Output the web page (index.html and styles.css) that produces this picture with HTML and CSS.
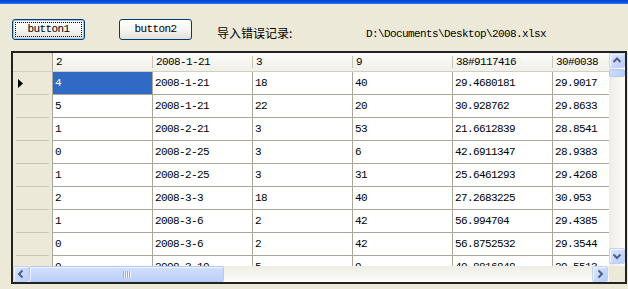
FILE: index.html
```html
<!DOCTYPE html>
<html>
<head>
<meta charset="utf-8">
<link rel="stylesheet" href="styles.css">
</head>
<body>
<div class="titlebar"></div>
<div class="toolbar">
  <button class="btn btn-default"><span class="focus">button1</span></button>
  <button class="btn btn2">button2</button>
  <span class="label">导入错误记录:</span>
  <span class="path">D:\Documents\Desktop\2008.xlsx</span>
</div>
<div class="dgv">
  <div class="cells">
    <div class="grid">
      <div class="corner"></div>
      <div class="ch">2</div><div class="ch">2008-1-21</div><div class="ch">3</div><div class="ch">9</div><div class="ch">38#9117416</div><div class="ch">30#0038</div>

      <div class="rh"><svg class="cur" width="5" height="9" viewBox="0 0 5 9"><polygon points="0,0 5,4.5 0,9" fill="#000"/></svg></div>
      <div class="c sel">4</div><div class="c">2008-1-21</div><div class="c">18</div><div class="c">40</div><div class="c">29.4680181</div><div class="c">29.9017</div>

      <div class="rh"></div>
      <div class="c">5</div><div class="c">2008-1-21</div><div class="c">22</div><div class="c">20</div><div class="c">30.928762</div><div class="c">29.8633</div>

      <div class="rh"></div>
      <div class="c">1</div><div class="c">2008-2-21</div><div class="c">3</div><div class="c">53</div><div class="c">21.6612839</div><div class="c">28.8541</div>

      <div class="rh"></div>
      <div class="c">0</div><div class="c">2008-2-25</div><div class="c">3</div><div class="c">6</div><div class="c">42.6911347</div><div class="c">28.9383</div>

      <div class="rh"></div>
      <div class="c">1</div><div class="c">2008-2-25</div><div class="c">3</div><div class="c">31</div><div class="c">25.6461293</div><div class="c">29.4268</div>

      <div class="rh"></div>
      <div class="c">2</div><div class="c">2008-3-3</div><div class="c">18</div><div class="c">40</div><div class="c">27.2683225</div><div class="c">30.953</div>

      <div class="rh"></div>
      <div class="c">1</div><div class="c">2008-3-6</div><div class="c">2</div><div class="c">42</div><div class="c">56.994704</div><div class="c">29.4385</div>

      <div class="rh"></div>
      <div class="c">0</div><div class="c">2008-3-6</div><div class="c">2</div><div class="c">42</div><div class="c">56.8752532</div><div class="c">29.3544</div>

      <div class="rh"></div>
      <div class="c">0</div><div class="c">2008-3-10</div><div class="c">5</div><div class="c">9</div><div class="c">40.8816848</div><div class="c">29.5513</div>
    </div>
  </div>
  <div class="vscroll">
    <div class="sbtn sbtn-up"><svg width="14" height="13" viewBox="0 0 14 13"><polyline points="3.5,8 7,4.5 10.5,8" fill="none" stroke="#4D6185" stroke-width="2"/></svg></div>
    <div class="vthumb"></div>
    <div class="vtrack"></div>
    <div class="sbtn sbtn-down"><svg width="14" height="14" viewBox="0 0 14 14"><polyline points="3.5,5.5 7,9 10.5,5.5" fill="none" stroke="#4D6185" stroke-width="2"/></svg></div>
  </div>
  <div class="hscroll">
    <div class="sbtn sbtn-left"><svg width="14" height="14" viewBox="0 0 14 14"><polyline points="8.5,3.5 5,7 8.5,10.5" fill="none" stroke="#4D6185" stroke-width="2"/></svg></div>
    <div class="hthumb"><span class="grip"></span></div>
    <div class="htrack"></div>
    <div class="sbtn sbtn-right"><svg width="14" height="14" viewBox="0 0 14 14"><polyline points="5.5,3.5 9,7 5.5,10.5" fill="none" stroke="#4D6185" stroke-width="2"/></svg></div>
  </div>
  <div class="sizebox"></div>
</div>
</body>
</html>
```
FILE: styles.css
```css
html, body {
  margin: 0;
  padding: 0;
}
body {
  background: #ECE9D8;
  width: 628px;
  height: 289px;
  overflow: hidden;
  font-family: "Liberation Mono", "DejaVu Sans Mono", monospace;
  font-size: 11px;
  letter-spacing: -0.6px;
  color: #000;
}

.titlebar {
  height: 4px;
  background: linear-gradient(#0840D2, #0A55E8 60%, #3E80F4);
}

.toolbar {
  display: flex;
  align-items: flex-start;
  padding: 15px 0 0 12px;
  height: 21px;
}

.btn {
  box-sizing: border-box;
  width: 73px;
  height: 21px;
  margin: 0;
  padding: 0;
  border: 1px solid #003C74;
  border-radius: 3px;
  background: linear-gradient(#FFFFFF, #F4F4F0 55%, #E2E1D9);
  font-family: "Liberation Mono", "DejaVu Sans Mono", monospace;
  font-size: 11px;
  letter-spacing: -0.6px;
  color: #000;
  line-height: 17px;
}
.btn-default {
  padding: 2px;
  box-shadow: inset 0 0 0 1px #A9C2EE;
}
.btn-default .focus {
  display: flex;
  align-items: center;
  justify-content: center;
  box-sizing: border-box;
  height: 100%;
  border: 1px dotted #000;
}
.btn2 {
  margin-left: 34px;
}
.label {
  width: 74px;
  margin-left: 25px;
  margin-top: 7px;
  font-family: "Noto Sans CJK SC", sans-serif;
  font-size: 12px;
  letter-spacing: 0;
  line-height: 14px;
  white-space: nowrap;
}
.path {
  margin-left: 75px;
  margin-top: 9px;
  line-height: 13px;
  white-space: nowrap;
}

.dgv {
  box-sizing: border-box;
  margin: 11px 0 0 11px;
  width: 616px;
  height: 233px;
  border: 2px solid #222;
  display: grid;
  grid-template-columns: 596px 16px;
  grid-template-rows: 213px 16px;
}
.cells {
  overflow: hidden;
  background: #fff;
}
.grid {
  display: grid;
  grid-template-columns: 40px repeat(6, 100px);
  grid-template-rows: 19px;
  grid-auto-rows: 23px;
  width: 640px;
}
.corner {
  background: #ECE9D8;
  border-right: 1px solid #ACA899;
  border-bottom: 1px solid #D2CFC0;
}
.ch {
  box-sizing: border-box;
  padding-left: 3px;
  line-height: 18px;
  white-space: nowrap;
  overflow: hidden;
  border-bottom: 1px solid #D2CFC0;
  background:
    linear-gradient(#C7C4B5, #C7C4B5) right 0 top 3px / 1px 12px no-repeat,
    linear-gradient(#FCFCFA, #F0EFE8);
}
.rh {
  box-sizing: border-box;
  display: flex;
  align-items: center;
  padding-left: 5px;
  border-right: 1px solid #ACA899;
  background:
    linear-gradient(#C8C5B5, #C8C5B5) left 3px bottom 0 / 33px 1px no-repeat,
    #ECE9D8;
}
.c {
  box-sizing: border-box;
  padding-left: 2px;
  line-height: 22px;
  white-space: nowrap;
  overflow: hidden;
  border-right: 1px solid #ACA899;
  border-bottom: 1px solid #ACA899;
  background: #fff;
}
.c.sel {
  background: #316AC5;
  color: #fff;
}

.sbtn {
  box-sizing: border-box;
  display: flex;
  align-items: center;
  justify-content: center;
  border: 1px solid #C2D2F7;
  border-radius: 2px;
  background: linear-gradient(135deg, #DCE6FE, #B9CCF7);
  box-shadow: inset 1px 1px 0 #F2F6FF;
}

.vscroll {
  display: flex;
  flex-direction: column;
  background: linear-gradient(90deg, #EEEDE5, #FCFCF9);
}
.sbtn-up {
  height: 15px;
  width: 16px;
}
.vthumb {
  box-sizing: border-box;
  height: 8px;
  margin-top: 1px;
  border: 1px solid #B4C8F4;
  border-radius: 2px;
  background: linear-gradient(90deg, #CCDBFC, #BACDF8);
}
.vtrack {
  flex: 1;
}
.sbtn-down {
  height: 16px;
  width: 16px;
  margin-bottom: 2px;
}

.hscroll {
  display: flex;
  background: linear-gradient(#EEEDE5, #FCFCF9);
}
.sbtn-left, .sbtn-right {
  width: 16px;
  height: 16px;
}
.hthumb {
  box-sizing: border-box;
  width: 195px;
  display: flex;
  align-items: center;
  justify-content: center;
  border: 1px solid #B4C8F4;
  border-radius: 2px;
  background: linear-gradient(#D3E0FD, #BCCFF8);
  box-shadow: inset 1px 1px 0 #EEF3FF;
}
.grip {
  width: 8px;
  height: 7px;
  background: repeating-linear-gradient(90deg, #8EAEF0 0 1px, #EEF3FF 1px 2px);
}
.htrack {
  flex: 1;
}
.sbtn-right {
  margin-right: 1px;
}
.sizebox {
  background: #ECE9D8;
}
```
